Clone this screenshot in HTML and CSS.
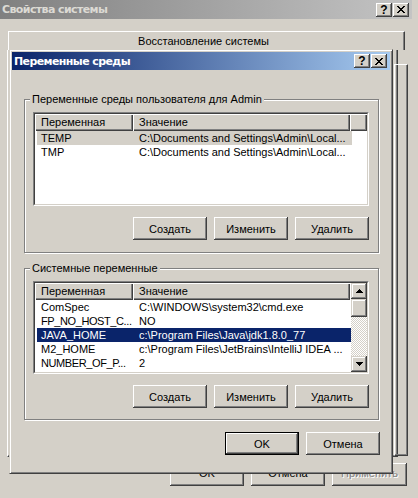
FILE: index.html
```html
<!DOCTYPE html>
<html lang="ru">
<head>
<meta charset="utf-8">
<title>Переменные среды</title>
<link rel="stylesheet" href="styles.css">
</head>
<body>
<div class="otitle">
  <span class="ttext inactive">Свойства системы</span>
  <div class="caps">
    <span class="cap q">?</span>
    <span class="cap"><svg width="8" height="7" viewBox="0 0 8 7" shape-rendering="crispEdges"><path d="M0 0h2v1h-2zM6 0h2v1h-2zM1 1h2v1h-2zM5 1h2v1h-2zM2 2h4v1h-4zM3 3h2v1h-2zM2 4h4v1h-4zM1 5h2v1h-2zM5 5h2v1h-2zM0 6h2v1h-2zM6 6h2v1h-2z"/></svg></span>
  </div>
</div>

<div class="tab">Восстановление системы</div>
<div class="back1"></div>
<div class="back2"></div>
<div class="obtn ob-ok">OK</div>
<div class="obtn ob-cancel">Отмена</div>
<div class="obtn ob-apply disabled">Применить</div>

<div class="dialog">
  <div class="dtitle">
    <span class="ttext">Переменные среды</span>
    <div class="caps">
      <span class="cap q">?</span>
      <span class="cap"><svg width="8" height="7" viewBox="0 0 8 7" shape-rendering="crispEdges"><path d="M0 0h2v1h-2zM6 0h2v1h-2zM1 1h2v1h-2zM5 1h2v1h-2zM2 2h4v1h-4zM3 3h2v1h-2zM2 4h4v1h-4zM1 5h2v1h-2zM5 5h2v1h-2zM0 6h2v1h-2zM6 6h2v1h-2z"/></svg></span>
    </div>
  </div>

  <div class="group g1">
    <div class="glabel">Переменные среды пользователя для Admin</div>
    <div class="lv lv1">
      <div class="lv-in">
        <div class="lv-main">
          <div class="hdr">
            <div class="hc h1">Переменная</div>
            <div class="hc h2">Значение</div>
            <div class="hc hf"></div>
          </div>
          <div class="row sel-inactive"><div class="c1">TEMP</div><div class="c2">C:\Documents and Settings\Admin\Local...</div></div>
          <div class="row"><div class="c1">TMP</div><div class="c2">C:\Documents and Settings\Admin\Local...</div></div>
        </div>
      </div>
    </div>
    <div class="brow">
      <button class="btn">Создать</button>
      <button class="btn">Изменить</button>
      <button class="btn">Удалить</button>
    </div>
  </div>

  <div class="group g2">
    <div class="glabel">Системные переменные</div>
    <div class="lv lv2">
      <div class="lv-in">
        <div class="lv-main">
          <div class="hdr">
            <div class="hc h1">Переменная</div>
            <div class="hc h2">Значение</div>
            <div class="hc hf"></div>
          </div>
          <div class="row"><div class="c1">ComSpec</div><div class="c2">C:\WINDOWS\system32\cmd.exe</div></div>
          <div class="row"><div class="c1 tight">FP_NO_HOST_C...</div><div class="c2">NO</div></div>
          <div class="row sel"><div class="c1">JAVA_HOME</div><div class="c2">c:\Program Files\Java\jdk1.8.0_77</div></div>
          <div class="row"><div class="c1">M2_HOME</div><div class="c2">c:\Program Files\JetBrains\IntelliJ IDEA ...</div></div>
          <div class="row"><div class="c1 tight">NUMBER_OF_P...</div><div class="c2">2</div></div>
        </div>
        <div class="sbar">
          <div class="sbtn"><svg width="7" height="4" viewBox="0 0 7 4" shape-rendering="crispEdges"><path d="M3 0h1v1h1v1h1v1h1v1H0V3h1V2h1V1h1z"/></svg></div>
          <div class="sthumb"></div>
          <div class="strack"></div>
          <div class="sbtn"><svg width="7" height="4" viewBox="0 0 7 4" shape-rendering="crispEdges"><path d="M0 0h7v1H6v1H5v1H4v1H3V3H2V2H1V1H0z"/></svg></div>
        </div>
      </div>
    </div>
    <div class="brow">
      <button class="btn">Создать</button>
      <button class="btn">Изменить</button>
      <button class="btn">Удалить</button>
    </div>
  </div>

  <div class="drow">
    <button class="btn default">OK</button>
    <button class="btn">Отмена</button>
  </div>
</div>
</body>
</html>
```

FILE: styles.css
```css
* { box-sizing: border-box; }
html, body { margin: 0; padding: 0; }
body {
  width: 418px;
  height: 498px;
  overflow: hidden;
  position: relative;
  background: #d4d0c8;
  color: #000;
  font-family: "Liberation Sans", Arial, sans-serif;
  font-size: 11px;
}

/* caption bars */
.otitle {
  width: 412px;
  height: 19px;
  display: flex;
  align-items: center;
  justify-content: space-between;
  padding: 0 3px 0 2px;
  background: linear-gradient(to right, #808080, #c4c4c4);
}
.ttext {
  font-family: "DejaVu Sans", Verdana, sans-serif;
  font-weight: bold;
  font-size: 11px;
  color: #fff;
  white-space: nowrap;
  letter-spacing: -0.6px;
}
.ttext.inactive { color: #dcdad4; }
.caps { display: flex; gap: 1px; }
.cap {
  width: 16px;
  height: 14px;
  display: flex;
  align-items: center;
  justify-content: center;
  background: #d4d0c8;
  box-shadow: inset -1px -1px #404040, inset 1px 1px #fff, inset -2px -2px #808080;
}
.cap.q {
  font-family: "Liberation Sans", Arial, sans-serif;
  font-weight: bold;
  font-size: 12px;
  line-height: 14px;
}

/* background window pieces */
.tab {
  position: absolute;
  left: 8px;
  top: 31px;
  width: 397px;
  height: 19px;
  text-align: center;
  line-height: 18px;
  padding-right: 6px;
  border-top: 1px solid #fff;
  border-left: 1px solid #fff;
  border-right: 1px solid #404040;
  box-shadow: inset -1px 0 #808080;
}
.back1 {
  position: absolute;
  left: 7px;
  top: 50px;
  width: 391px;
  height: 407px;
  border-left: 1px solid #fff;
  border-right: 1px solid #404040;
  border-bottom: 1px solid #404040;
  box-shadow: inset -1px -1px #808080;
}
.back2 {
  position: absolute;
  left: 394px;
  top: 64px;
  width: 14px;
  height: 392px;
  border-top: 1px solid #fff;
  border-left: 1px solid #fff;
  border-right: 1px solid #404040;
  border-bottom: 1px solid #404040;
  box-shadow: inset -1px -1px #808080;
}
.obtn {
  position: absolute;
  top: 463px;
  width: 74px;
  height: 23px;
  display: flex;
  align-items: center;
  justify-content: center;
  padding-bottom: 3px;
  background: #d4d0c8;
  box-shadow: inset -1px -1px #404040, inset 1px 1px #fff, inset -2px -2px #808080;
}
.ob-ok { left: 170px; }
.ob-cancel { left: 251px; }
.ob-apply { left: 332px; width: 75px; }
.disabled { color: #808080; text-shadow: 1px 1px #fff; }

/* dialog */
.dialog {
  position: absolute;
  left: 9px;
  top: 49px;
  width: 384px;
  height: 425px;
  padding: 2px;
  background: #d4d0c8;
  border: 1px solid;
  border-color: #d4d0c8 #404040 #404040 #d4d0c8;
  box-shadow: inset 1px 1px #fff, inset -1px -1px #808080;
  display: flex;
  flex-direction: column;
}
.dtitle {
  height: 18px;
  display: flex;
  align-items: center;
  justify-content: space-between;
  padding: 0 3px 0 2px;
  background: linear-gradient(to right, #0a246a, #a6caf0);
}

.group {
  margin-left: 12px;
  width: 355px;
  border: 1px solid #808080;
  box-shadow: 1px 1px 0 #fff, inset 1px 1px 0 #fff;
  padding: 0 0 12px 7px;
}
.g1 { margin-top: 29px; }
.g2 { margin-top: 15px; padding-bottom: 11px; }
.glabel {
  display: table;
  margin: -7px 0 0 -2px;
  padding: 0 2px;
  height: 13px;
  line-height: 13px;
  background: #d4d0c8;
  white-space: nowrap;
}

/* list views */
.lv {
  margin-top: 6px;
  margin-left: 1px;
  width: 336px;
  border: 1px solid;
  border-color: #808080 #fff #fff #808080;
}
.lv1 { height: 94px; }
.lv2 { height: 93px; }
.lv-in {
  height: 100%;
  border: 1px solid;
  border-color: #404040 #d4d0c8 #d4d0c8 #404040;
  background: #fff;
  display: flex;
}
.lv-main { flex: 1; display: flex; flex-direction: column; overflow: hidden; }
.hdr { display: flex; height: 17px; flex: none; }
.hc {
  height: 17px;
  line-height: 16px;
  padding-left: 6px;
  background: #d4d0c8;
  white-space: nowrap;
  box-shadow: inset 1px 1px #fff, inset -1px -1px #404040, inset -2px -2px #808080;
}
.h1 { width: 98px; }
.h2 { width: 217px; }
.hf { flex: 1; padding: 0; }
.row {
  display: flex;
  height: 14px;
  line-height: 14px;
  margin-left: 2px;
  width: 315px;
  white-space: nowrap;
  flex: none;
}
.lv2 .row { width: 314px; }
.c1 { width: 96px; flex: none; padding-left: 4px; overflow: hidden; }
.c1.tight { letter-spacing: -0.4px; overflow: visible; }
.c2 { flex: 1; padding-left: 6px; overflow: hidden; }
.sel-inactive { background: #d4d0c8; }
.sel { background: #0a246a; color: #fff; }

.sbar { width: 16px; display: flex; flex-direction: column; flex: none; }
.sbtn, .sthumb {
  height: 16px;
  flex: none;
  background: #d4d0c8;
  display: flex;
  align-items: center;
  justify-content: center;
  box-shadow: inset -1px -1px #404040, inset 1px 1px #d4d0c8, inset -2px -2px #808080, inset 2px 2px #fff;
}
.sthumb { height: 18px; }
.strack {
  flex: 1;
  background: repeating-conic-gradient(#fff 0 25%, #d4d0c8 0 50%) 0 0 / 2px 2px;
}

/* buttons */
.brow {
  margin-top: 11px;
  margin-left: 1px;
  width: 336px;
  display: flex;
  justify-content: flex-end;
  gap: 7px;
}
.btn {
  width: 74px;
  height: 23px;
  padding: 0;
  margin: 0;
  border: 0;
  font: inherit;
  color: #000;
  background: #d4d0c8;
  box-shadow: inset -1px -1px #404040, inset 1px 1px #fff, inset -2px -2px #808080;
  display: flex;
  align-items: center;
  justify-content: center;
}
.btn.default {
  border: 1px solid #000;
}
.drow {
  margin-top: 12px;
  margin-left: 212px;
  width: 156px;
  display: flex;
  justify-content: flex-end;
  gap: 7px;
}
```
